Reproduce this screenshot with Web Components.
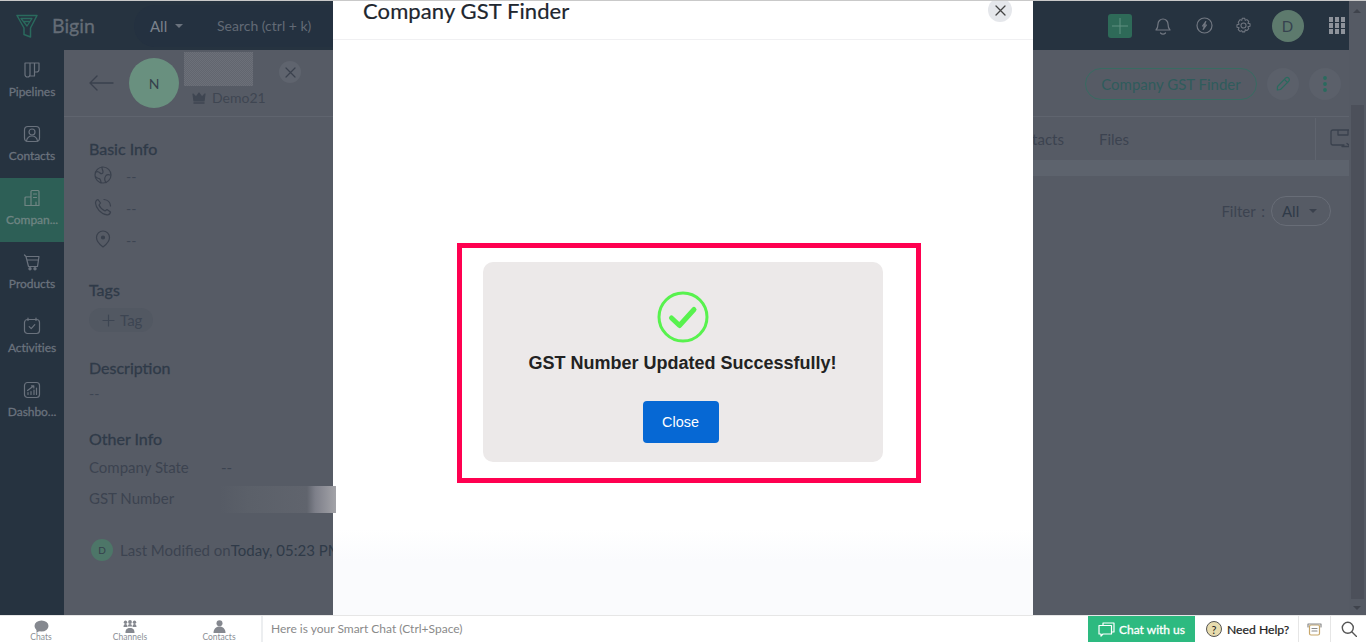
<!DOCTYPE html>
<html lang="en"><head><meta charset="utf-8"><title>Bigin</title>
<style>
html,body{margin:0;height:642px;overflow:hidden;background:#565b65;font-family:Lato,"Liberation Sans",sans-serif}
</style></head><body>
<app-shell></app-shell>
<script>
const ic=(w,h,vb,body,extra='')=>`<svg width="${w}" height="${h}" viewBox="${vb}" fill="none" stroke="currentColor" stroke-width="1.2" stroke-linecap="round" stroke-linejoin="round" ${extra}>${body}</svg>`;
function def(name,css,html){
  customElements.define(name,class extends HTMLElement{
    constructor(){super();const r=this.attachShadow({mode:'open'});
      r.innerHTML=`<style>${css}</style>${typeof html==='function'?html(this):html}`;}
  });
}
def('nav-item',`:host{display:flex;flex-direction:column;align-items:center;height:64px;box-sizing:border-box;padding-top:11px;color:#6a727d;font-size:12px;letter-spacing:-.05px;white-space:nowrap;-webkit-text-stroke:.3px #6a727d}
:host([active]){background:#2d5f56;color:#6f8583;-webkit-text-stroke:.3px #6f8583}
.i{height:20px;display:flex;align-items:center;justify-content:center;-webkit-text-stroke:0}
.l{margin-top:3px;line-height:16px}`,`<div class="i"><slot name="icon"></slot></div><div class="l"><slot></slot></div>`);

def('side-nav',`:host{display:block;width:64px;flex:none;background:#263340}`,()=>`
<nav-item><span slot="icon">${ic(18,18,'0 0 18 18','<path d="M2 2h5v11.500c0 1.600-1 2.500-2.500 2.500S2 15 2 13.500zM7 2h4.500v13H7.500M11.500 2H16v6.500c0 1.500-1 2.500-2.500 2.500h-2"/>')}</span>Pipelines</nav-item>
<nav-item><span slot="icon">${ic(18,18,'0 0 18 18','<rect x="1.500" y="1.500" width="15" height="15" rx="3.500"/><circle cx="9" cy="7" r="3"/><path d="M3.500 16c.6-3.500 2.600-5 5.500-5s4.900 1.500 5.500 5"/>')}</span>Contacts</nav-item>
<nav-item active><span slot="icon">${ic(18,18,'0 0 18 18','<path d="M8 16.500V2.500c0-.6.400-1 1-1h6c.6 0 1 .4 1 1v14zM8 8H3c-.6 0-1 .4-1 1v7.500h6M10.500 5h3M10.500 8.500h3M13 13v3.500"/>')}</span>Compan...</nav-item>
<nav-item><span slot="icon">${ic(18,18,'0 0 18 18','<path d="M1.500 2 3 3.500h13l-1.500 10h-9L3 3.500M4 7h11.500"/><circle cx="7" cy="15.800" r="1.100" fill="currentColor"/><circle cx="12" cy="15.800" r="1.100" fill="currentColor"/>')}</span>Products</nav-item>
<nav-item><span slot="icon">${ic(18,18,'0 0 18 18','<rect x="1.500" y="2.500" width="15" height="14" rx="3"/><path d="M5 1v2.500M13 1v2.500M6.200 9.700 8.200 11.700 11.800 7.700"/>')}</span>Activities</nav-item>
<nav-item><span slot="icon">${ic(18,18,'0 0 18 18','<rect x="1.500" y="1.500" width="15" height="15" rx="3"/><path d="M5 13.500v-2M8 13.500v-3M11 13.500V9M13.500 13.500V7M4.500 9.500 10.500 5M8.500 4.800 10.800 4.800 10.800 7"/>')}</span>Dashbo...</nav-item>`);

def('top-bar',`:host{display:flex;align-items:center;height:49px;background:#263340;color:#6a727d}
.logo{display:flex;align-items:center;width:150px;padding-left:16px;box-sizing:border-box;gap:14px;font-size:19.500px;color:#646c76;-webkit-text-stroke:.3px #646c76}
.logo svg{color:#2a6a5d;flex:none}
.search{display:flex;align-items:center;height:42px;width:195px;margin-left:-16px;border-radius:21px 0 0 21px;background:#243140;padding-left:16px;font-size:14px;color:#626a75}
.all{width:67px;display:flex;align-items:center;gap:8px;font-size:15px;color:#7b828c}
.all i{border:4px solid transparent;border-top-color:#6a727d;margin-top:4px}
.r{margin-left:auto;display:flex;align-items:center;padding-right:4px;color:#727882}
.r span{display:flex}
.plus{width:24px;height:24px;background:#2e6a58;border-radius:3px;display:grid;place-items:center;color:#5f9080;margin-right:23px}
.av{width:32px;height:32px;border-radius:50%;background:#5d7a6d;color:#36424f;display:grid;place-items:center;font-size:15px;margin:0 25px 0 20px}
.g{display:grid;grid-template-columns:repeat(3,4.500px);gap:1.500px}
.g b{height:4.500px;background:#8e939b}`,()=>`
<div class="logo">${ic(22,24,'0 0 22 24','<path d="M1 1.500h20L14.500 14v9L8 20.500V14z" stroke-width="1.500"/><path d="M5 4.500 11 12l5-7.500zM7.500 7.500h6" stroke-width="1.300"/>')}<span>Bigin</span></div>
<div class="search"><div class="all">All <i></i></div><span>Search (ctrl + k)</span></div>
<div class="r">
<div class="plus">${ic(16,16,'0 0 16 16','<path d="M8 0v16M0 8h16" stroke-width="1"/>')}</div>
<span style="margin-right:25px">${ic(16,20,'0 0 16 20','<path d="M1 14c1.500-1.500 2-2.500 2-6a5 5 0 0 1 10 0c0 3.500.5 4.500 2 6zM5.500 17c1.500 1.500 3.500 1.500 5 0"/>')}</span>
<span style="margin-right:22px">${ic(17,17,'0 0 17 17','<circle cx="8.500" cy="8.500" r="7.500"/><path d="M9.800 4.500 6.500 9h2l-1.300 3.500L10.500 8h-2z"/>')}</span>
<span>${ic(17,17,'0 0 20 20','<circle cx="10" cy="10" r="3"/><path d="M8.500 1.500h3l.5 2.500 2-.9 2.200 2.100-1 2.200 2.500.6v3l-2.500.6 1 2.200-2.200 2.100-2-.9-.5 2.500h-3L8 16l-2 .9-2.200-2.100 1-2.200-2.500-.6v-3l2.500-.6-1-2.200L6 3.100 8 4z"/>')}</span>
<div class="av">D</div>
<div class="g">${'<b></b>'.repeat(9)}</div>
</div>`);

def('info-head',`:host{display:block;font-size:16px;line-height:20px;color:#2f3a48;-webkit-text-stroke:.3px #2f3a48}`,`<slot></slot>`);
def('info-row',`:host{display:flex;align-items:center;height:32px;color:#3d4552;font-size:14px}
.i{width:37px;padding-left:5px;box-sizing:border-box;display:flex;color:#3a414d}`,`<div class="i"><slot name="icon"></slot></div><slot></slot>`);

def('record-side',`:host{display:block;width:269px;flex:none;padding:22px 0 0 25px;box-sizing:border-box;height:100%;color:#3d4552;font-size:14px}
.kv{display:grid;grid-template-columns:132px 1fr;align-items:center;height:31px;font-size:15px;color:#3c4350}
.pill{display:inline-flex;align-items:center;gap:5px;height:24px;padding:0 11px 0 13px;border-radius:12px;background:#525862;color:#3d4552;font-size:15px;margin-top:8px}
.dash{line-height:20px;margin-top:6px}
.mod{display:flex;align-items:center;height:24px;white-space:nowrap;font-size:15px;color:#3c4350;width:400px}
.mod i{width:22px;height:22px;border-radius:50%;background:#4d7668;color:#35404c;font-style:normal;font-size:10px;display:grid;place-items:center;margin:0 7px 0 2px}
.mod b{font-weight:400;color:#2f3a48}`,()=>`
<info-head>Basic Info</info-head>
<div style="height:1px"></div>
<info-row><span slot="icon">${ic(18,18,'0 0 18 18','<circle cx="9" cy="9" r="8"/><path d="M2 6c2-1 3 0 4 1s3 1 3-1-1-2-1-4.800M12 16.500c-1.500-2-1.500-5 0-7 1-1 3-1 4-.5M7 17c0-3-.5-4-2-4.500S2 12 1.500 10.500"/>')}</span>--</info-row>
<info-row><span slot="icon">${ic(18,18,'0 0 18 18','<path d="M4 1.500 6.500 5 5 7c1 2.500 3 4.500 6 6l2-1.500 3.500 2.500c-.5 2-2 3-3.500 2.800C6.500 16 1.800 9.500 1.500 5 1.500 3.300 2.500 2 4 1.500zM10 1.500c3.500.3 6.300 3 6.500 6.500"/>')}</span>--</info-row>
<info-row><span slot="icon">${ic(18,18,'0 0 18 18','<path d="M9 17C5 14 2.500 11 2.500 7.500a6.500 6.500 0 0 1 13 0C15.500 11 13 14 9 17z"/><circle cx="9" cy="7.500" r="1.500" fill="currentColor"/>')}</span>--</info-row>
<div style="height:24px"></div>
<info-head>Tags</info-head>
<div class="pill">${ic(13,13,'0 0 13 13','<path d="M6.500 1v11M1 6.500h11"/>')}<span>Tag</span></div>
<div style="height:26px"></div>
<info-head>Description</info-head>
<div class="dash">--</div>
<div style="height:25px"></div>
<info-head>Other Info</info-head>
<div style="height:2px"></div>
<div class="kv"><span>Company State</span><span>--</span></div>
<div class="kv"><span>GST Number</span><span></span></div>
<div class="mod" style="margin-top:25px"><i>D</i>Last Modified on<b>Today, 05:23 PM</b></div>`);

def('record-head',`:host{display:flex;align-items:center;height:67px;border-bottom:1px solid #5f646e;box-sizing:border-box;color:#3c4350}
.back{margin-left:25px;color:#3a414d;display:flex}
.av{width:50px;height:50px;border-radius:50%;background:#69907f;color:#35404c;display:grid;place-items:center;font-size:14px;margin-left:15px;flex:none}
.who{margin-left:5px;align-self:flex-start;padding-top:2px;width:99px;flex:none}
.blur{width:69px;height:34px;background:repeating-conic-gradient(#62666f 0 25%,#6c7079 0 50%) 0 0/2px 2px}
.own{display:flex;align-items:center;gap:6px;margin:2px 0 0 8px;font-size:14px;line-height:20px;color:#3f4652}
.x{width:22px;height:22px;border-radius:50%;background:#5f646e;display:grid;place-items:center;align-self:flex-start;margin:11px 0 0 -4px;color:#3a414d}
.acts{margin-left:auto;display:flex;align-items:center;gap:10px;margin-right:8px;margin-top:1px}
.btn{height:32px;width:172px;box-sizing:border-box;border:1px solid #386b62;border-radius:16px;display:grid;place-items:center;color:#2f5c5c;font-size:15px}
.c{width:32px;height:32px;border-radius:50%;background:#5b606a;display:grid;place-items:center;color:#2a6a5e}`,()=>`
<div class="back">${ic(25,16,'0 0 25 16','<path d="M24 8H1M8 1 1 8l7 7" stroke-width="1.400"/>')}</div>
<div class="av">N</div>
<div class="who"><div class="blur"></div><div class="own">${ic(14,12,'0 0 14 12','<path d="M1 2l3 3 3-4 3 4 3-3-1 7H2z" fill="currentColor"/><path d="M2 11h10" stroke-width="1.500"/>')}<span>Demo21</span></div></div>
<div class="x">${ic(11,11,'0 0 11 11','<path d="M1 1l9 9M10 1l-9 9"/>')}</div>
<div class="acts"><div class="btn">Company GST Finder</div><div class="c">${ic(15,15,'0 0 15 15','<path d="M1.500 10.500 9.500 2.200c1-1 2.300-1 3.200 0s.8 2.200-.1 3.100L4.500 13.500l-3.200.5zM8.500 3.500l3.200 3.200" stroke-width="1.200"/>')}</div><div class="c"><svg width="6" height="18" viewBox="0 0 6 18" fill="currentColor"><circle cx="3" cy="3" r="1.900"/><circle cx="3" cy="9" r="1.900"/><circle cx="3" cy="15" r="1.900"/></svg></div></div>`);

def('record-main',`:host{display:block;flex:1;min-width:0;color:#3c4350;border-left:1px solid #5a5f69}
.tabs{height:43px;padding-top:1px;box-sizing:border-box;display:flex;align-items:center;font-size:15px;justify-content:flex-end;overflow:hidden;gap:35px}
.div{width:1px;height:43px;background:#5f646e;margin-left:151px;flex:none}
.ico{width:33px;height:43px;flex:none;display:flex;align-items:center;margin-left:-35px;overflow:hidden;padding-left:14px;box-sizing:border-box;color:#3a414d}
.ico svg{flex:none}
.strip{height:16px;background:#5d636d}
.f{display:flex;justify-content:flex-end;align-items:center;padding:20px 18px 0 0;gap:6px;font-size:15px}
.f>span{word-spacing:2px}
.sel{width:60px;height:30px;box-sizing:border-box;border:1px solid #686d77;border-radius:15px;display:flex;align-items:center;padding-left:10px;gap:10px;color:#2f3a48;font-size:15px}
.sel i{border:4px solid transparent;border-top-color:#3a414d;margin-top:4px}`,()=>`
<div class="tabs"><span>Contacts</span><span>Files</span><div class="div"></div><div class="ico">${ic(24,20,'0 0 24 20','<path d="M24 1H3C1.800 1 1 1.800 1 3v11c0 1.200.8 2 2 2h11M8 1v5h10V1M12 17.500h12M17 14.500l3.500 3" stroke-width="1.300"/>')}</div></div>
<div class="strip"></div>
<div class="f"><span>Filter :</span><div class="sel"><span>All</span><i></i></div></div>`);

def('scroll-bar',`:host{display:block;width:17px;flex:none;background:#555a64;position:relative}
.t{position:absolute;left:2px;right:2px;top:104px;bottom:16px;background:#4c505a}
.u,.d{position:absolute;left:4px;border:4px solid transparent}
.u{top:8px;border-bottom-color:#3f434c;border-top:0}
.d{bottom:5px;border-top-color:#3f434c;border-bottom:0}`,`<div class="t"></div><i class="u"></i><i class="d"></i>`);

def('success-card',`:host{display:flex;flex-direction:column;align-items:center;width:400px;height:200px;box-sizing:border-box;background:#ece9e9;border-radius:10px;padding-top:29px;font-family:"Liberation Sans",Arial,sans-serif}
.t{font-size:18px;font-weight:700;line-height:22px;margin-top:9px;color:#222;white-space:nowrap}
button{all:unset;box-sizing:border-box;width:76px;height:42px;margin-top:27px;background:#0668d4;border-radius:4px;color:#fff;font-size:14.400px;text-align:center;line-height:40px;position:relative;left:-2px}
svg{display:block}`,`
<svg width="52" height="52" viewBox="0 0 52 52" fill="none" stroke="#58f24e"><circle cx="26" cy="26" r="24" stroke-width="3"/><path d="M14.500 27 22.500 34.500 37 18.500" stroke-width="5" stroke-linecap="round" stroke-linejoin="round"/></svg>
<div class="t">GST Number Updated Successfully!</div>
<button>Close</button>`);

def('gst-modal',`:host{position:absolute;left:333px;top:0;width:700px;height:614px;background:linear-gradient(#fff 0 528px,#fafbfd 560px);display:flex;flex-direction:column}
.hd{height:39px;flex:none;border-bottom:1px solid #f0f0f2;display:flex;align-items:flex-start;padding:0 21px 0 30px;box-sizing:border-box}
h2{margin:0;font-weight:400;font-size:22px;line-height:20px;letter-spacing:.1px;color:#20262e;-webkit-text-stroke:.2px #20262e;flex:1}
.x{width:24px;height:24px;border-radius:50%;background:#e5e7eb;display:grid;place-items:center;color:#444;margin-top:-3px}
.bd{flex:1;display:flex;justify-content:center;align-items:flex-start;padding-top:203px;box-sizing:border-box}
.mark{border:5px solid #ff0050;width:464px;height:240px;box-sizing:border-box;padding:14px 0 0 21px;margin-left:11px}`,()=>`
<div class="hd"><h2>Company GST Finder</h2><div class="x">${ic(11,11,'0 0 11 11','<path d="M1 1l9 9M10 1l-9 9" stroke-width="1.300"/>')}</div></div>
<div class="bd"><div class="mark"><success-card></success-card></div></div>`);

def('dock-item',`:host{display:flex;flex:none;flex-direction:column;align-items:center;width:89px;color:#8b8f96;font-size:8.500px;line-height:9px}
::slotted(span){display:block;height:13px}`,`<slot name="icon"></slot><slot></slot>`);
def('bottom-bar',`:host{display:flex;align-items:stretch;height:27px;background:#fff;border-top:1px solid #e6e6e6;box-sizing:border-box;color:#333}
.dock{display:flex;flex:none;width:263px;padding-top:4px;box-sizing:border-box;border-right:2px solid #eceef0;overflow:hidden}
dock-item:first-child{margin-left:-3.500px}
.in{flex:1;padding-left:8px;font-size:12px;line-height:26px;color:#8a8a8a}
.chat{width:107px;background:#2dba80;color:#fff;display:flex;align-items:center;gap:4px;padding-left:10px;box-sizing:border-box;font-size:12px;-webkit-text-stroke:.3px #fff}
.help{width:104px;display:flex;align-items:center;gap:5px;padding-left:11px;box-sizing:border-box;font-size:12.200px;color:#222;border-right:1px solid #e6e6e6;-webkit-text-stroke:.2px #222}
.q{width:16px;height:16px;border-radius:50%;border:1px solid #555;background:#e8dcae;display:grid;place-items:center;font-size:11px;box-sizing:border-box;-webkit-text-stroke:0}
.n{width:31px;display:grid;place-items:center;border-right:1px solid #e6e6e6;color:#777}
.s{flex:none;width:35px;display:grid;place-items:center;color:#555}`,()=>`
<div class="dock">
<dock-item><span slot="icon"><svg width="15" height="13" viewBox="0 0 15 13" fill="#85888f"><ellipse cx="7.500" cy="6" rx="7" ry="5.500"/><path d="M2.500 9v4l3.500-2.500z"/></svg></span>Chats</dock-item>
<dock-item><span slot="icon"><svg width="14" height="13" viewBox="0 0 14 13" fill="#85888f"><circle cx="2.500" cy="2.200" r="1.700"/><circle cx="11.500" cy="2.200" r="1.700"/><circle cx="7" cy="2" r="1.900"/><path d="M.5 7c0-2 .8-3 2-3s2 1 2 3zM9.500 7c0-2 .8-3 2-3s2 1 2 3zM5 6.500c0-1.800.8-2.500 2-2.500s2 .7 2 2.500zM2.500 13c0-2.500.5-5 4.500-5s4.500 2.500 4.500 5z"/></svg></span>Channels</dock-item>
<dock-item><span slot="icon"><svg width="13" height="13" viewBox="0 0 13 13" fill="#85888f"><circle cx="6.500" cy="3.200" r="3"/><path d="M.5 13c0-4 2.500-6.500 6-6.500s6 2.500 6 6.500z"/></svg></span>Contacts</dock-item>
</div>
<div class="in">Here is your Smart Chat (Ctrl+Space)</div>
<div class="chat">${ic(17,15,'0 0 17 15','<path d="M5 3V1h11v9h-2M1 3.500h12.500V12H5l-2 2v-2H1z" stroke-width="1.200"/>')}<span>Chat with us</span></div>
<div class="help"><span class="q">?</span><span>Need Help?</span></div>
<div class="n">${ic(15,14,'0 0 15 14','<rect x="2.500" y="3" width="10" height="10" rx="1.500"/><path d="M1 5V2h13v3M5 6.500h5M5 9h5" stroke="#8a8a8a"/>','style="color:#c8a76a"')}</div>
<div class="s">${ic(16,16,'0 0 16 16','<circle cx="6.800" cy="6.800" r="5.500" stroke-width="1.400"/><path d="M11 11l4.500 4.500" stroke-width="1.400"/>')}</div>`);

def('app-shell',`:host{display:flex;flex-direction:column;height:642px;position:relative;overflow:hidden;border-top:1px solid #c9c9c9;box-sizing:border-box}
.upper{flex:1;display:flex;min-height:0}
.left{flex:1;display:flex;flex-direction:column;min-width:0}
.mid{flex:1;display:flex;min-height:0}
.col{flex:1;display:flex;flex-direction:column;min-width:0;background:#565b65}
.body{flex:1;display:flex;min-height:0}
.smear{position:absolute;left:220px;top:485px;width:116px;height:27px;background:linear-gradient(90deg,#565b65 0,#5b6069 25%,#60646d 75%,#7d7f89 82%,#8e8f97 90%,#a3a3a8 100%)}`,`
<div class="upper"><div class="left"><top-bar></top-bar>
<div class="mid"><side-nav></side-nav>
<div class="col"><record-head></record-head><div class="body"><record-side></record-side><record-main></record-main></div></div></div></div>
<scroll-bar></scroll-bar></div>
<bottom-bar></bottom-bar>
<gst-modal></gst-modal>
<div class="smear"></div>`);
</script>
</body></html>
